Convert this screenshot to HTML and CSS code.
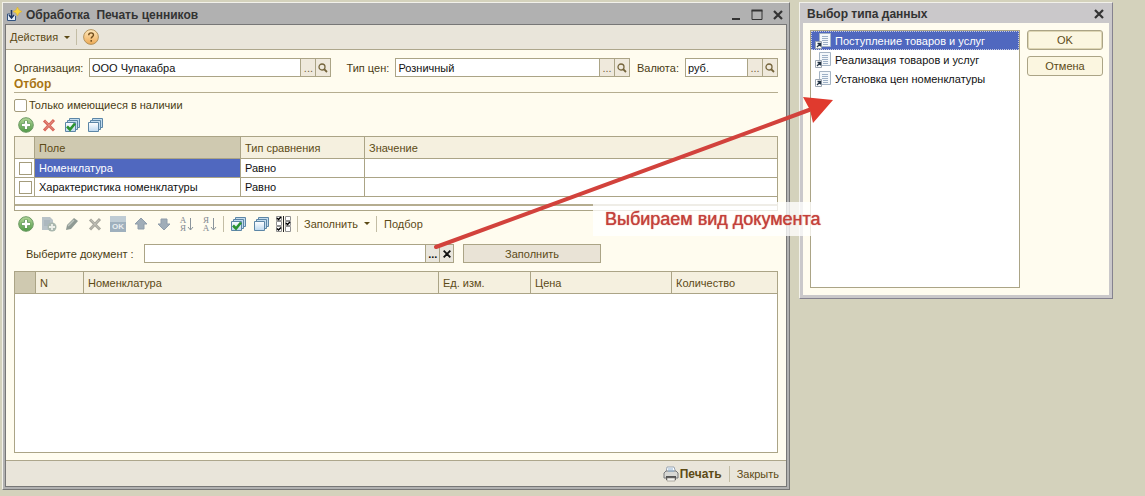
FILE: index.html
```html
<!DOCTYPE html>
<html lang="ru">
<head>
<meta charset="utf-8">
<title>Печать ценников</title>
<link rel="stylesheet" href="styles.css">
</head>
<body>
<svg class="defs" aria-hidden="true">
  <defs>
    <linearGradient id="green" x1="0" y1="0" x2="0" y2="1"><stop offset="0" stop-color="#b4d69a"/><stop offset="1" stop-color="#4f9a45"/></linearGradient>
    <linearGradient id="amber" x1="0" y1="0" x2="0" y2="1"><stop offset="0" stop-color="#ffe9bd"/><stop offset="1" stop-color="#eda954"/></linearGradient>
    <linearGradient id="page" x1="0" y1="0" x2="0" y2="1"><stop offset="0" stop-color="#ffffff"/><stop offset="1" stop-color="#bcd8ef"/></linearGradient>
  </defs>
  <symbol id="i-add" viewBox="0 0 16 16"><circle cx="8" cy="8" r="7.3" fill="url(#green)" stroke="#6c9a64"/><path d="M8 3.8v8.4M3.8 8h8.4" stroke="#4c8744" stroke-width="4"/><path d="M8 4v8M4 8h8" stroke="#fff" stroke-width="2.4"/></symbol>
  <symbol id="i-del" viewBox="0 0 16 16"><path d="M3 3.5l10 10M13 3l-10 10.500" stroke="currentColor" stroke-width="3"/><path d="M4 4l8 8.500M12 4l-8 8.500" stroke="#fff" stroke-opacity=".25" stroke-width="1"/></symbol>
  <symbol id="i-stack" viewBox="0 0 16 16"><path d="M5.500 1.500h10v9h-10z" fill="#c3dcee" stroke="#5c86a6"/><path d="M3.500 3.500h10v9h-10z" fill="#c3dcee" stroke="#5c86a6"/><path d="M1.500 5.500h10v9h-10z" fill="url(#page)" stroke="#5c86a6"/></symbol>
  <symbol id="i-check" viewBox="0 0 16 16"><use href="#i-stack"/><path d="M3 9.500l3 3 5-6" fill="none" stroke="#2b9330" stroke-width="2.600"/></symbol>
  <symbol id="i-copy" viewBox="0 0 16 16"><path d="M1 1h8l3 3v10H1z" fill="#b9c3c8"/><path d="M3 5h6M3 7h6M3 9h4" stroke="#a0adb4"/><circle cx="11" cy="11" r="4.500" fill="#a9b7ae"/><path d="M11 8v6M8 11h6" stroke="#eef0ea" stroke-width="1.800"/></symbol>
  <symbol id="i-pencil" viewBox="0 0 16 16"><path d="M2 14l1-5 7-7 4 3-7 8z" fill="#8f9a94"/><path d="M4 10l6-6" stroke="#bcc3bd" stroke-width="1.500"/></symbol>
  <symbol id="i-up" viewBox="0 0 16 16"><path d="M8 2l6 6h-3v5H5V8H2z" fill="#a0adb8" stroke="#8f9dab"/></symbol>
  <symbol id="i-down" viewBox="0 0 16 16"><path d="M8 14l6-6h-3V3H5v5H2z" fill="#a0adb8" stroke="#8f9dab"/></symbol>
  <symbol id="i-arrow" viewBox="0 0 7 16"><path d="M3.500 2v12M1 11l2.500 3L6 11" fill="none" stroke="#8b959c"/></symbol>
  <symbol id="i-list" viewBox="0 0 16 16"><path d="M.5.500h5v4h-5zM.5 5.500h5v4h-5zM.5 10.500h5v5h-5zM9.500.500h5v4h-5zM9.500 5.500h5v4h-5zM9.500 10.500h5v5h-5z" fill="#fff" stroke="#929292"/><path d="M7.500 0v16" stroke="#222"/><path d="M1 2l1.500 1.500L5 1M10 7l1.500 1.500L14 6M1 12.500L2.500 14 5 11.500" fill="none" stroke="#000" stroke-width="1.500"/></symbol>
  <symbol id="i-lens" viewBox="0 0 12 12"><circle cx="5" cy="5" r="3" fill="none" stroke="#75653c" stroke-width="1.300"/><path d="M7 7l3 3" stroke="#75653c" stroke-width="1.800"/></symbol>
  <symbol id="i-x" viewBox="0 0 12 12"><path d="M2 2l8 8M10 2l-8 8" stroke="currentColor" stroke-width="2.200"/></symbol>
  <symbol id="i-doc" viewBox="0 0 16 16"><path d="M4.500.500h11v13h-11z" fill="#f4f8fb" stroke="#a5b4c4"/><path d="M7 3.500h6M7 5.500h6M7 7.500h6M8 9.500h5M8 11.500h5" stroke="#9db0c6"/><path d="M.5 8.500h6v7h-6z" fill="#fff" stroke="#9aa4b0"/><path d="M2 14l3-3M2.500 10.500h3v3" fill="none" stroke="#234" stroke-width="1.300"/></symbol>
</svg>

<main class="window main">
  <header class="titlebar">
    <svg class="ic" viewBox="0 0 16 16"><path d="M4 7H1.500v6.500h8V9" fill="#e4ecf6" stroke="#31527f"/><path d="M5.500 3v7M3 8l2.500 3L8 8" fill="none" stroke="#1c3560" stroke-width="1.500"/><path d="M11.500 0l1.500 3 3 1.500-3 1.500-1.500 3L10 6 7 4.500 10 3z" fill="#f8d53b" stroke="#d8ac2b" stroke-width=".5"/></svg>
    <h1 class="caption">Обработка&nbsp; Печать ценников</h1>
    <button class="sys" aria-label="Свернуть"><svg class="ic12" viewBox="0 0 12 12"><path d="M2 10h8" stroke="#333" stroke-width="2"/></svg></button>
    <button class="sys" aria-label="Развернуть"><svg class="ic12" viewBox="0 0 12 12"><path d="M1 1.500h10v9H1z" fill="none" stroke="#333"/><path d="M.5 1.500h11" stroke="#333" stroke-width="2"/></svg></button>
    <button class="sys" aria-label="Закрыть окно"><svg class="ic12"><use href="#i-x"/></svg></button>
  </header>
  <div class="client">
    <nav class="menubar">
      <button class="flat">Действия <span class="caret"></span></button>
      <span class="sep"></span>
      <button class="flat" aria-label="Справка"><svg class="ic" viewBox="0 0 16 16"><circle cx="8" cy="8" r="7.400" fill="url(#amber)" stroke="#b3935d"/><path d="M5.700 6.200c0-3 4.800-3 4.800-.2 0 1.600-2.300 1.700-2.300 3.600M8.200 11v1.700" fill="none" stroke="#704d1d" stroke-width="1.400"/></svg></button>
    </nav>
    <div class="content">
      <div class="fields">
        <label for="org" class="l-org">Организация:</label>
        <div class="combo c-org"><input id="org" value="ООО Чупакабра"><button aria-label="Выбрать организацию">...</button><button aria-label="Открыть организацию"><svg class="ic12"><use href="#i-lens"/></svg></button></div>
        <label for="price" class="l-price">Тип цен:</label>
        <div class="combo c-price"><input id="price" value="Розничный"><button aria-label="Выбрать тип цен">...</button><button aria-label="Открыть тип цен"><svg class="ic12"><use href="#i-lens"/></svg></button></div>
        <label for="cur" class="l-cur">Валюта:</label>
        <div class="combo c-cur"><input id="cur" value="руб."><button aria-label="Выбрать валюту">...</button><button aria-label="Открыть валюту"><svg class="ic12"><use href="#i-lens"/></svg></button></div>
      </div>
      <h2 class="group">Отбор</h2>
      <label class="only"><input type="checkbox" class="box">Только имеющиеся в наличии</label>
      <div class="tools">
        <button class="tool" aria-label="Добавить отбор"><svg class="ic"><use href="#i-add"/></svg></button>
        <button class="tool red" aria-label="Удалить отбор"><svg class="ic"><use href="#i-del"/></svg></button>
        <button class="tool" aria-label="Включить все"><svg class="ic"><use href="#i-check"/></svg></button>
        <button class="tool" aria-label="Снять все"><svg class="ic"><use href="#i-stack"/></svg></button>
      </div>
      <div class="frame filter">
        <table class="grid">
          <colgroup><col class="w-mark"><col class="w-field"><col class="w-cmp"><col></colgroup>
          <thead><tr><th></th><th class="current">Поле</th><th>Тип сравнения</th><th>Значение</th></tr></thead>
          <tbody>
            <tr><td class="mark"><input type="checkbox" class="box" aria-label="Номенклатура"></td><td class="selected">Номенклатура</td><td>Равно</td><td></td></tr>
            <tr><td class="mark"><input type="checkbox" class="box" aria-label="Характеристика номенклатуры"></td><td>Характеристика номенклатуры</td><td>Равно</td><td></td></tr>
          </tbody>
        </table>
        <div class="strip"></div>
      </div>
      <div class="tools second">
        <button class="tool" aria-label="Добавить"><svg class="ic"><use href="#i-add"/></svg></button>
        <button class="tool" aria-label="Скопировать"><svg class="ic"><use href="#i-copy"/></svg></button>
        <button class="tool" aria-label="Изменить"><svg class="ic"><use href="#i-pencil"/></svg></button>
        <button class="tool gray" aria-label="Удалить"><svg class="ic"><use href="#i-del"/></svg></button>
        <button class="tool save" aria-label="Сохранить">OK</button>
        <button class="tool" aria-label="Вверх"><svg class="ic"><use href="#i-up"/></svg></button>
        <button class="tool" aria-label="Вниз"><svg class="ic"><use href="#i-down"/></svg></button>
        <button class="tool sort" aria-label="По возрастанию"><span class="letters">А<br>Я</span><svg class="down"><use href="#i-arrow"/></svg></button>
        <button class="tool sort" aria-label="По убыванию"><span class="letters">Я<br>А</span><svg class="down"><use href="#i-arrow"/></svg></button>
        <span class="sep"></span>
        <button class="tool" aria-label="Отметить все"><svg class="ic"><use href="#i-check"/></svg></button>
        <button class="tool" aria-label="Снять отметки"><svg class="ic"><use href="#i-stack"/></svg></button>
        <button class="tool" aria-label="Инвертировать"><svg class="ic"><use href="#i-list"/></svg></button>
        <span class="sep"></span>
        <button class="flat">Заполнить <span class="caret"></span></button>
        <span class="sep wide"></span>
        <button class="flat">Подбор</button>
      </div>
      <div class="document">
        <label for="doc">Выберите документ :</label>
        <div class="combo dark"><input id="doc"><button aria-label="Выбрать документ">...</button><button aria-label="Очистить"><svg class="ic12"><use href="#i-x"/></svg></button></div>
        <button class="fill">Заполнить</button>
      </div>
      <div class="frame goods">
        <table class="grid">
          <colgroup><col class="w-mark2"><col class="w-n"><col><col class="w-unit"><col class="w-price"><col class="w-qty"></colgroup>
          <thead><tr><th class="current"></th><th>N</th><th>Номенклатура</th><th>Ед. изм.</th><th>Цена</th><th>Количество</th></tr></thead>
        </table>
      </div>
    </div>
    <footer class="footer">
      <button class="flat strong"><svg class="ic" viewBox="0 0 16 16"><path d="M4 1h7l2 6H3z" fill="#fff" stroke="#96a3b2"/><path d="M1 7l2-2h10l2 2v5H1z" fill="#d8d8d4" stroke="#77787a"/><path d="M3 10h10v4H3z" fill="#555"/><path d="M4 12h8v3H4z" fill="#f3f3ee" stroke="#86827a" stroke-width=".6"/><path d="M5 3h5M5 5h6" stroke="#8bb0d2"/></svg>Печать</button>
      <span class="sep"></span>
      <button class="flat">Закрыть</button>
    </footer>
  </div>
</main>

<section class="window dialog">
  <header class="titlebar">
    <h2 class="caption">Выбор типа данных</h2>
    <button class="sys" aria-label="Закрыть диалог"><svg class="ic12"><use href="#i-x"/></svg></button>
  </header>
  <div class="panel">
    <ul class="types">
      <li class="selected"><svg class="ic"><use href="#i-doc"/></svg>Поступление товаров и услуг</li>
      <li><svg class="ic"><use href="#i-doc"/></svg>Реализация товаров и услуг</li>
      <li><svg class="ic"><use href="#i-doc"/></svg>Установка цен номенклатуры</li>
    </ul>
    <div class="actions">
      <button class="btn default">OK</button>
      <button class="btn">Отмена</button>
    </div>
  </div>
</section>

<svg class="arrow" viewBox="0 0 400 152" aria-hidden="true"><path d="M2 149L375 12" stroke="#d2423c" stroke-width="4" stroke-linecap="round"/><path d="M399 2L369-1l7 13 3 13z" fill="#e03a2e"/></svg>
<p class="note">Выбираем вид документа</p>
</body>
</html>
```
FILE: styles.css
```css
* { box-sizing: border-box; }

body {
  margin: 0;
  min-height: 100vh;
  padding: 2px 32px 6px 2px;
  display: flex;
  align-items: flex-start;
  gap: 9px;
  position: relative;
  background: #d4d2bc;
  color: #111;
  font: 11px/16px "Liberation Sans", Arial, sans-serif;
}

.defs { position: absolute; width: 0; height: 0; }
h1, h2, p, ul { margin: 0; padding: 0; }
button, input { font: inherit; color: inherit; margin: 0; padding: 0; border: 0; background: none; border-radius: 0; }
.ic { width: 16px; height: 16px; flex: none; display: block; }
.ic12 { width: 12px; height: 12px; display: block; }

.window {
  display: flex;
  flex-direction: column;
  background: #b1b1b1;
  border: 1px solid #777;
  border-top-color: #f2f1ea;
  border-left-color: #f2f1ea;
}
.main { flex: 1; min-width: 0; padding: 0 2px 2px; min-height: 488px; }
.dialog { width: 314px; min-height: 297px; padding: 0 3px 3px; background: #cac8ca; border-color: #f2f1ea #85828f #85828f #f2f1ea; }

.titlebar { display: flex; align-items: center; gap: 9px; height: 21px; padding: 2px 3px 0 1px; color: #333; }
.dialog .titlebar { height: 20px; padding: 2px 4px 0; }
.caption { flex: 1; font-size: 12px; line-height: 16px; font-weight: bold; white-space: nowrap; }
.main .titlebar .ic + .caption { margin-left: -5px; }
.sys { width: 12px; height: 12px; }

.client { flex: 1; display: flex; flex-direction: column; border: 1px solid #777; background: #fffcef; }
.menubar { display: flex; align-items: center; height: 25px; gap: 6px; padding: 0 4px; background: #e9e5da; border-bottom: 1px solid #ada68b; }
.flat { display: flex; align-items: center; gap: 6px; color: #5c4a16; white-space: nowrap; }
.caret { border: 3px solid transparent; border-top-color: #5c4a16; border-bottom: 0; }
.sep { width: 1px; height: 16px; background: #c3bda5; }

.content { flex: 1; display: flex; flex-direction: column; padding: 8px 8px 7px; }

.fields { display: flex; align-items: center; color: #4a3c14; white-space: nowrap; }
.l-org { width: 75px; }
.l-price { width: 49px; margin-left: 15px; }
.l-cur { width: 48px; margin-left: 7px; }
.c-org { flex: 243 1 0; }
.c-price { flex: 235 1 0; }
.c-cur { flex: 92 1 0; }

.combo { display: flex; height: 19px; min-width: 0; border: 1px solid #aba486; background: #fff; }
.combo input { flex: 1; min-width: 0; padding-left: 2px; color: #111; outline: 0; }
.combo button { width: 15px; display: grid; place-items: center; background: #efe9dc; border-left: 1px solid #aba486; color: #75653c; line-height: 16px; }
.combo.dark button { color: #111; background: #e9e6dd; font-weight: bold; width: 14px; }
.combo.dark .ic12 { width: 10px; height: 10px; }

.group { font-size: 12px; line-height: 15px; color: #a87413; border-bottom: 1px solid #b5ad90; }
.only { display: flex; align-items: center; gap: 2px; height: 16px; margin-top: 4px; color: #4a3c14; }
.box { appearance: none; width: 13px; height: 13px; border: 1px solid #a49c7c; border-radius: 2px; background: #fff; flex: none; display: block; }
.grid .box { border-radius: 0; }

.tools { display: flex; align-items: center; gap: 7px; height: 23px; padding-left: 4px; }
.tool { width: 16px; height: 16px; }
.tools .sep { margin: 0 -1px 0 -2px; }
.tools .sep.wide { margin: 0 0 0 -1px; }
.red { color: #d9685a; }
.gray { color: #aaa99f; }
.second { height: 25px; }
.save { padding-top: 6px; background: linear-gradient(#bfccd4 0 6px, #9fb0bd 6px); color: #e9edee; font-size: 8px; line-height: 10px; font-weight: bold; text-align: center; }
.sort { display: flex; align-items: center; justify-content: center; gap: 1px; }
.letters { font: 9px/8px "Liberation Serif", serif; color: #7f8990; }
.down { width: 7px; height: 16px; flex: none; }

.frame { border: 1px solid #aba486; background: #fff; }
.grid { width: 100%; table-layout: fixed; border-collapse: separate; border-spacing: 0; }
.grid th, .grid td { padding: 0 4px; border-right: 1px solid #aba486; border-bottom: 1px solid #aba486; text-align: left; font-weight: normal; white-space: nowrap; }
.grid th { height: 22px; background: #f5f0df; color: #5c4a16; }
.grid td { height: 19px; }
.grid th:last-child, .grid td:last-child { border-right: 0; }
.grid th.current { background: #cfc9b0; }
.grid td.selected { background: #5068bf; color: #fff; }
.grid td.mark { padding: 0 0 0 4px; }
.w-mark { width: 20px; }
.w-field { width: 206px; }
.w-cmp { width: 124px; }
.w-mark2 { width: 21px; }
.w-n { width: 48px; }
.w-unit { width: 92px; }
.w-price { width: 141px; }
.w-qty { width: 105px; }
.strip { height: 9px; margin-bottom: 4px; border-bottom: 2px solid #b5ad90; }

.document { display: flex; align-items: center; padding-left: 12px; margin: 8px 0; color: #4a3c14; }
.document label { width: 118px; white-space: nowrap; }
.document .combo { flex: 311 1 0; }
.fill { flex: 137 1 0; height: 19px; margin: 0 177px 0 9px; border: 1px solid #aba486; background: #e9e3d6; color: #5c4a16; }
.goods { flex: 1; }

.footer { display: flex; align-items: center; justify-content: flex-end; gap: 7px; height: 26px; padding-right: 7px; background: #e9e5da; border-top: 1px solid #ada68b; }
.strong { font-size: 12px; font-weight: bold; gap: 1px; }

.panel { flex: 1; display: flex; gap: 7px; padding: 7px 6px 7px 7px; background: #fffcef; }
.types { flex: 1; list-style: none; background: #fff; border: 1px solid #aba486; }
.types li { display: flex; align-items: center; gap: 4px; height: 19px; padding-left: 4px; white-space: nowrap; }
.types .selected { background: #5068bf; color: #fff; outline: 1px dotted #c8cbe0; outline-offset: -1px; }
.actions { width: 76px; display: flex; flex-direction: column; gap: 6px; }
.btn { height: 20px; border: 1px solid #aba486; border-radius: 3px; background: #fbf6e0; color: #5c4a16; }
.default { box-shadow: inset 0 0 0 1px #ded6b4; }

.note { position: absolute; left: 593px; top: 202px; padding: 7px 15px 7px 12px; background: rgba(255, 255, 255, .78); color: #c5413b; text-shadow: 0 0 1px #c5413b; font-size: 18px; line-height: 20px; white-space: nowrap; }
.arrow { position: absolute; left: 434px; top: 98px; width: 400px; height: 152px; overflow: visible; }
```
